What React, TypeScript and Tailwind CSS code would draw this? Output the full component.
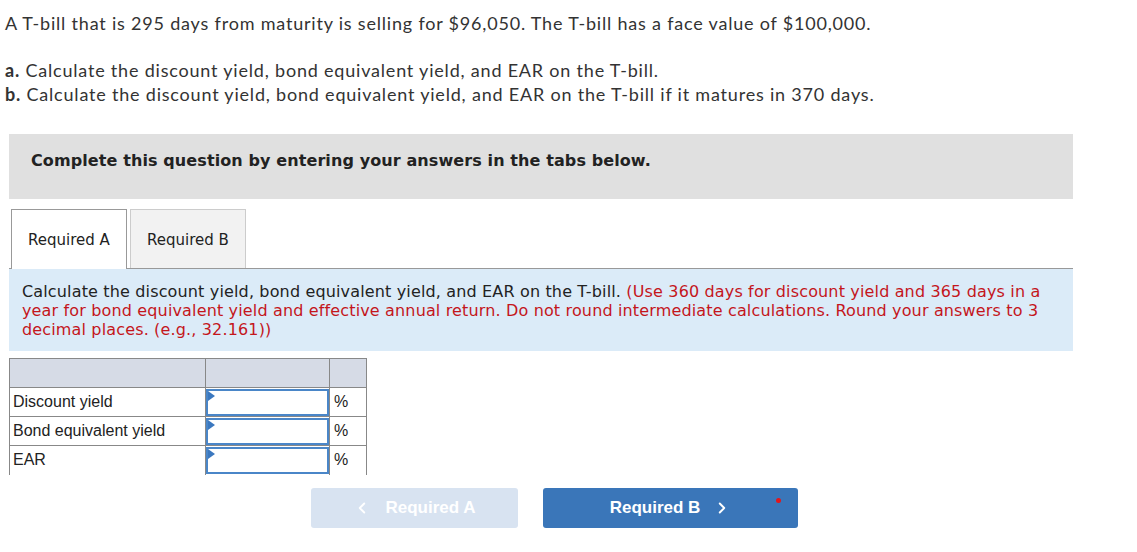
import { ChevronLeft, ChevronRight } from 'lucide-react'

const ROWS = ['Discount yield', 'Bond equivalent yield', 'EAR']

function AnswerInput() {
  return (
    <div className="relative h-[27px] w-full border-2 border-[#4a86c8] bg-white">
      <span className="absolute left-0 top-0 h-0 w-0 border-y-[5px] border-l-[7px] border-y-transparent border-l-[#3b78bf]" />
    </div>
  )
}

export default function App() {
  return (
    <div className="h-[552px] w-[1137px] bg-white text-[#333]">
      <div className="pl-[5px] pt-[11px] font-[family-name:Lato,sans-serif] text-[18px] leading-[24px] tracking-[0.8px] text-[#333]">
        <p>A T-bill that is 295 days from maturity is selling for $96,050. The T-bill has a face value of $100,000.</p>
        <p className="mt-[23px]">
          <span className="font-bold">a.</span> Calculate the discount yield, bond equivalent yield, and EAR on the T-bill.
        </p>
        <p>
          <span className="font-bold">b.</span> Calculate the discount yield, bond equivalent yield, and EAR on the T-bill if it matures in 370 days.
        </p>
      </div>

      <div className="ml-[9px] mt-[28px] w-[1064px]">
        <div className="h-[65px] bg-[#e0e0e0] pl-[22px] pt-[16px] font-[family-name:DejaVu_Sans,Verdana,sans-serif] text-[16px] leading-[22px] font-bold tracking-[0.1px] text-[#222]">
          Complete this question by entering your answers in the tabs below.
        </div>

        <div className="mt-[10px] flex border-b border-[#999] pl-[2px] font-[family-name:DejaVu_Sans,Verdana,sans-serif] text-[15px] text-[#222]">
          <div className="-mb-px flex h-[60px] w-[116px] items-center justify-center border border-b-0 border-[#999] bg-white pt-[2px]">
            Required A
          </div>
          <div className="ml-[3px] flex h-[59px] w-[116px] items-center justify-center border border-b-0 border-[#ccc] bg-[#f2f2f2] pt-[3px]">
            Required B
          </div>
        </div>

        <div className="h-[82px] bg-[#dbebf8] px-[13px] pt-[13px] font-[family-name:DejaVu_Sans,Verdana,sans-serif] text-[16px] leading-[19px] tracking-[0.15px] text-[#222]">
          Calculate the discount yield, bond equivalent yield, and EAR on the T-bill.{' '}
          <span className="text-[#c4161c]">
            (Use 360 days for discount yield and 365 days in a year for bond equivalent yield and effective annual return. Do not round intermediate calculations. Round your answers to 3 decimal places. (e.g., 32.161))
          </span>
        </div>

        <table className="mt-[7px] border-collapse font-[family-name:Liberation_Sans,Arial,sans-serif] text-[16px] text-[#222]">
          <thead>
            <tr className="h-[29px] bg-[#d6dbe6]">
              <th className="w-[196px] border border-[#888]" />
              <th className="w-[124px] border border-[#888]" />
              <th className="w-[37px] border border-[#888]" />
            </tr>
          </thead>
          <tbody>
            {ROWS.map((row, i) => (
              <tr key={row} className="h-[29px] leading-[18px]">
                <td className={`border border-[#888] px-[3px] pb-[1px] ${i === ROWS.length - 1 ? 'border-b-0' : ''}`}>{row}</td>
                <td className={`border border-[#888] p-0 ${i === ROWS.length - 1 ? 'border-b-0' : ''}`}>
                  <AnswerInput />
                </td>
                <td className={`border border-[#888] px-[4px] ${i === ROWS.length - 1 ? 'border-b-0' : ''}`}>%</td>
              </tr>
            ))}
          </tbody>
        </table>
      </div>

      <div className="mt-[13px] flex pl-[311px] font-[family-name:Liberation_Sans,Arial,sans-serif] text-[17px] font-bold text-white">
        <div className="flex h-[40px] w-[207px] items-center justify-center gap-[14px] rounded-[3px] bg-[#d8e3f1]">
          <ChevronLeft size={18} strokeWidth={2.5} />
          <span>Required A</span>
        </div>
        <div className="relative ml-[25px] flex h-[40px] w-[255px] items-center justify-center gap-[13px] rounded-[3px] bg-[#3a76b9]">
          <span>Required B</span>
          <ChevronRight size={18} strokeWidth={2.5} />
          <span className="absolute right-[17px] top-[10px] h-[5px] w-[5px] rounded-full bg-[#e3161b]" />
        </div>
      </div>
    </div>
  )
}
